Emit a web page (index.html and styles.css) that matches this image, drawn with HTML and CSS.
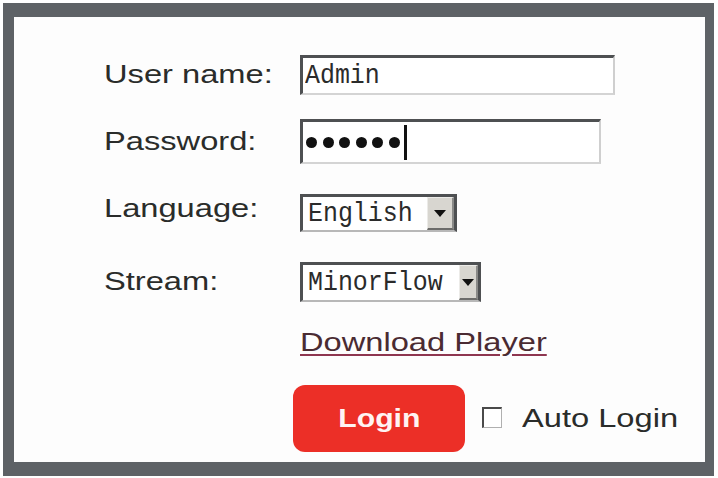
FILE: index.html
```html
<!DOCTYPE html>
<html>
<head>
<meta charset="utf-8">
<link rel="stylesheet" href="styles.css">
</head>
<body>
<div class="outer">
  <div class="frame">
    <div class="form">
      <div class="row r1">
        <div class="label"><span class="stretch">User name:</span></div>
        <div class="field text-field w1"><span class="mono">Admin</span></div>
      </div>
      <div class="row r2">
        <div class="label"><span class="stretch">Password:</span></div>
        <div class="field text-field w2">
          <span class="dots"><i></i><i></i><i></i><i></i><i></i><i></i></span><span class="caret"></span>
        </div>
      </div>
      <div class="row r3">
        <div class="label"><span class="stretch">Language:</span></div>
        <div class="select s1"><span class="mono">English</span><span class="arrow"><b></b></span></div>
      </div>
      <div class="row r4">
        <div class="label"><span class="stretch">Stream:</span></div>
        <div class="select s2"><span class="mono">MinorFlow</span><span class="arrow"><b></b></span></div>
      </div>
      <div class="row r5">
        <div class="label"></div>
        <a class="link" href="#"><span class="stretch">Download Player</span></a>
      </div>
      <div class="row r6">
        <div class="login-btn"><span>Login</span></div>
        <span class="checkbox"></span>
        <span class="auto"><span class="stretch">Auto Login</span></span>
      </div>
    </div>
  </div>
</div>
</body>
</html>
```

FILE: styles.css
```css
html, body {
  margin: 0;
  padding: 0;
  background: #ffffff;
}
body {
  width: 718px;
  height: 478px;
  overflow: hidden;
  font-family: "Liberation Sans", Arial, sans-serif;
}
.outer {
  padding: 3px 4px 2px 3px;
}
.frame {
  box-sizing: border-box;
  width: 711px;
  height: 473px;
  border-style: solid;
  border-color: #5e6266;
  border-width: 14px 9px 14px 11px;
  background: #fdfdfd;
}
.form {
  padding: 38px 0 0 90px;
  display: flex;
  flex-direction: column;
}
.row {
  display: flex;
  align-items: center;
}
.r1 { height: 40px; }
.r2 { height: 45px; margin-top: 24px; }
.r3 { height: 38px; margin-top: 30px; }
.r4 { height: 40px; margin-top: 30px; }
.r5 { height: 35px; margin-top: 23px; }
.r6 { height: 67px; margin-top: 25px; padding-left: 189px; }

.label {
  width: 196px;
  flex: none;
  font-size: 25.5px;
  color: #2a2c2a;
  line-height: 1;
}
.stretch {
  display: inline-block;
  transform: scaleX(1.28);
  transform-origin: 0 50%;
  white-space: nowrap;
}
.r3 .label { margin-top: -8px; }

.field {
  box-sizing: border-box;
  height: 100%;
  background: #fff;
  border-top: 3px solid #4e5052;
  border-left: 3px solid #4e5052;
  border-right: 2px solid #cfcfcf;
  border-bottom: 2px solid #d4d4d4;
  display: flex;
  align-items: center;
  padding-left: 2px;
}
.w1 { width: 315px; }
.w2 { width: 301px; }

.mono {
  display: inline-block;
  font-family: "Liberation Mono", "Courier New", monospace;
  font-size: 28px;
  color: #2b2b2b;
  transform: scaleX(0.89);
  transform-origin: 0 50%;
  white-space: nowrap;
  line-height: 1;
}

.dots {
  display: flex;
  gap: 5.5px;
  margin-left: 1px;
}
.dots i {
  display: block;
  width: 11px;
  height: 11px;
  border-radius: 50%;
  background: #111;
}
.caret {
  display: block;
  width: 3px;
  height: 35px;
  background: #111;
  margin-left: 4px;
}

.select {
  box-sizing: border-box;
  height: 100%;
  background: #fff;
  border-top: 3px solid #4e5052;
  border-left: 3px solid #4e5052;
  border-right: 3px solid #4e5052;
  border-bottom: 2px solid #b8b8b8;
  display: flex;
  align-items: center;
  justify-content: space-between;
  padding-left: 5px;
}
.s1 { width: 157px; }
.s2 { width: 181px; }
.arrow {
  box-sizing: border-box;
  align-self: stretch;
  width: 27px;
  background: #d8d6d0;
  border-right: 2px solid #8a8a88;
  border-bottom: 2px solid #6c6c6a;
  border-left: 1px solid #ecebe8;
  border-top: 1px solid #ecebe8;
  display: flex;
  align-items: center;
  justify-content: center;
}
.arrow b {
  display: block;
  width: 0;
  height: 0;
  border-left: 6px solid transparent;
  border-right: 6px solid transparent;
  border-top: 7px solid #111;
}

.link {
  font-size: 25.5px;
  line-height: 1;
  color: #4a2b32;
  text-decoration: underline;
  text-decoration-color: #8e3650;
  text-decoration-thickness: 2px;
  text-underline-offset: 3px;
}
.link .stretch {
  text-decoration: underline;
  text-decoration-color: #8e3650;
  text-decoration-thickness: 2px;
  text-underline-offset: 3px;
}

.login-btn {
  box-sizing: border-box;
  width: 172px;
  height: 67px;
  border-radius: 12px;
  background: #ec2f27;
  display: flex;
  align-items: center;
  justify-content: center;
  color: #fff3f3;
  font-weight: bold;
  font-size: 26px;
}
.login-btn span {
  display: inline-block;
  transform: scaleX(1.16);
}
.checkbox {
  box-sizing: border-box;
  width: 20px;
  height: 21px;
  margin-left: 17px;
  margin-top: -3px;
  background: #fff;
  border-top: 2px solid #4a4a4a;
  border-left: 2px solid #4a4a4a;
  border-right: 1px solid #b0b0b0;
  border-bottom: 1px solid #b0b0b0;
}
.auto {
  margin-left: 20px;
  font-size: 25.5px;
  line-height: 1;
  color: #2a2c2a;
}
```
